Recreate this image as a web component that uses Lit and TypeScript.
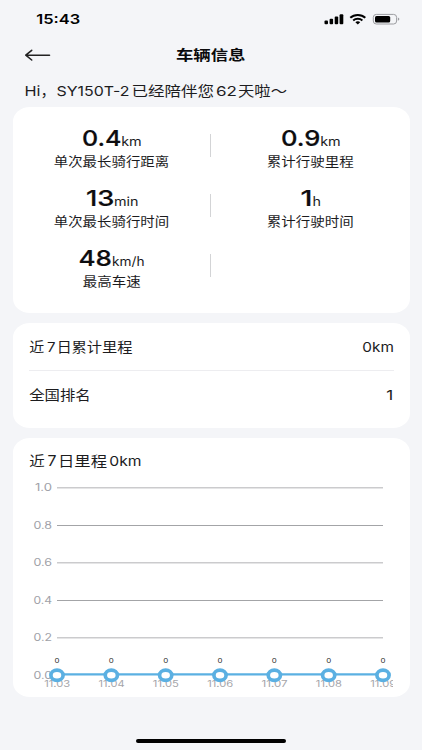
import { LitElement, html, svg, css } from "lit";
import { customElement } from "lit/decorators.js";

/** A piece of text: content, offset from the line start, width it is set to, font size. */
type Run = [text: string, x: number, width: number, size: number, cls?: string];

/** Sets a line in extended letterforms; the bottom of its box is the baseline. */
const line = (cls: string, width: number, height: number, runs: Run[]) => html`
  <svg class="line ${cls}" width=${width} height=${height}>
    ${runs.map(
      ([text, x, w, size, c = ""]) => svg`<text class=${c} x=${x} y=${height} font-size=${size}
        textLength=${w} lengthAdjust="spacingAndGlyphs">${text}</text>`
    )}
  </svg>`;

interface Stat {
  width: number;
  runs: Run[];
  label: string;
  labelWidth: number;
}

const STATS: (Stat | null)[][] = [
  [
    { width: 59, runs: [["0.4", 0, 39.5, 22, "big"], ["km", 39.2, 20.5, 12.5]], label: "单次最长骑行距离", labelWidth: 115.5 },
    { width: 59, runs: [["0.9", 0, 39.5, 22, "big"], ["km", 39.2, 20.5, 12.5]], label: "累计行驶里程", labelWidth: 87 },
  ],
  [
    { width: 52, runs: [["13", 0, 28.5, 22, "big"], ["min", 28, 24.5, 12.5]], label: "单次最长骑行时间", labelWidth: 115.5 },
    { width: 19, runs: [["1", -0.5, 12, 22, "big"], ["h", 11.5, 8.5, 12.5]], label: "累计行驶时间", labelWidth: 87 },
  ],
  [
    { width: 65, runs: [["48", -0.5, 33.5, 22, "big"], ["km/h", 33, 32.5, 12.5]], label: "最高车速", labelWidth: 58 },
    null,
  ],
];

const DAYS = ["11.03", "11.04", "11.05", "11.06", "11.07", "11.08", "11.09"];
const TICKS = ["1.0", "0.8", "0.6", "0.4", "0.2", "0.0"];

@customElement("mileage-chart")
export class MileageChart extends LitElement {
  static styles = css`
    :host { display: block; height: 220px; }
    svg { display: block; font-family: Inter, "Liberation Sans", sans-serif; }
    .tick { fill: #a0a1a8; }
    .day { fill: #a5a5aa; }
    .value { fill: #333; }
    .grid { stroke: #cbcbcd; stroke-width: 1.5; }
    .grid.dark { stroke: #a3a4a7; stroke-width: 1.1; }
    .series { stroke: #5bb0e2; stroke-width: 2.4; }
    .dot { fill: #fff; stroke: #5bb0e2; stroke-width: 3.7; }
  `;
  render() {
    const x0 = 28, x1 = 354;
    const y = (i: number) => 11.7 + i * 37.5;
    // Every second rule sits on a whole pixel row.
    const rule = (i: number) => (i % 2 ? Math.floor(y(i)) + 0.5 : y(i));
    const x = (i: number) => x0 + (i * (x1 - x0)) / (DAYS.length - 1);
    return html`<svg width="364.5" height="220">
      ${TICKS.map((t, i) => svg`
        ${i < 5 ? svg`<line class="grid ${i % 2 ? "dark" : ""}" x1=${x0} x2=${x1} y1=${rule(i)} y2=${rule(i)} />` : ""}
        <text class="tick" x=${i ? 4.5 : 6} y=${y(i) + 3.6} font-size="10.3" textLength=${i ? 18.5 : 17}
          lengthAdjust="spacingAndGlyphs">${t}</text>`)}
      ${DAYS.map((d, i) => svg`
        <text class="day" x=${x(i) - 12.8} y="211.2" font-size="9.2" textLength="26"
          lengthAdjust="spacingAndGlyphs">${d}</text>`)}
      <line class="series" x1=${x0} x2=${x1} y1="198.4" y2="198.4" />
      ${DAYS.map((_, i) => svg`
        <ellipse class="dot" cx=${x(i)} cy="199.3" rx="6.1" ry="5.1" />
        <text class="value" x=${x(i) - 2.5} y="186.8" font-size="6.3" textLength="5"
          lengthAdjust="spacingAndGlyphs">0</text>`)}
    </svg>`;
  }
}

@customElement("app-root")
export class AppRoot extends LitElement {
  static styles = css`
    :host {
      display: flex; flex-direction: column; box-sizing: border-box;
      width: 422px; height: 750px; overflow: hidden;
      background: #f4f5f8; color: #1c1c1e;
      font-family: Inter, "Noto Sans CJK SC", sans-serif;
    }
    .line { display: block; overflow: visible; fill: currentColor; flex: none; }
    .bold { font-weight: 700; color: #0b0b0c; margin-top: -2px; }
    .big { font-weight: 500; fill: #0d0d0f; stroke: #0d0d0f; stroke-width: 0.2px; }
    .status { display: flex; justify-content: space-between; height: 38px; padding: 0 22px 0 36px; box-sizing: border-box; }
    .clock { font-weight: 600; color: #000; margin-top: 14px; }
    .indicators { display: block; margin-top: 12px; }
    .nav { display: grid; grid-template-columns: 1fr 70px 1fr; align-items: center; height: 34px; }
    .back { margin-left: 24px; display: block; }
    .greeting { margin: 14px 0 11px 24px; }
    .card { background: #fff; border-radius: 17px / 14.5px; margin: 0 12.5px; box-sizing: border-box; flex: none; }
    .stats { height: 206px; padding-top: 23px; }
    .row { display: grid; grid-template-columns: 198px 2px 195.5px; height: 60px; }
    .stat { display: flex; flex-direction: column; align-items: center; gap: 9.5px; }
    .split { width: 1.5px; height: 23px; margin: 4px 0 0 -1px; background: #d3d4d6; }
    .totals { height: 104.5px; margin-top: 10px; padding: 0 16px; }
    .total { display: flex; justify-content: space-between; height: 47.5px; box-sizing: border-box; padding-top: 19px; }
    .total:first-child { border-bottom: 1px solid #ededf0; padding-top: 18.5px; }
    .chart { height: 259.5px; margin-top: 10px; padding: 18.5px 16px 0; }
    .chart mileage-chart { margin-top: 10px; }
    .home { width: 150px; height: 4.6px; border-radius: 3px; background: #000; margin: auto auto 6.7px; }
  `;

  private stat(s: Stat | null) {
    if (!s) return html`<div class="stat"></div>`;
    return html`<div class="stat">
      ${line("", s.width, 16, s.runs)}
      ${line("", s.labelWidth, 10, [[s.label, -0.3, s.labelWidth, 12.6]])}
    </div>`;
  }

  render() {
    return html`
      <div class="status">
        ${line("clock", 44, 10, [["15:43", 0.3, 44, 13.2]])}
        <svg class="indicators" width="77" height="14" viewBox="0 0 77 14">
          <rect x="1.5" y="8.6" width="3.5" height="3.6" rx="1" />
          <rect x="6.6" y="6.8" width="3.5" height="5.4" rx="1" />
          <rect x="11.7" y="4.6" width="3.5" height="7.6" rx="1" />
          <rect x="16.6" y="2.3" width="3.7" height="9.9" rx="1" />
          <g fill="none" stroke="#000" stroke-width="2">
            <path d="M27.3 5.8C31.3 2.1 38.3 2.1 42.3 5.8" />
            <path d="M30.2 8.4C32.7 6.2 36.9 6.2 39.4 8.4" />
          </g>
          <path d="M32.4 10.2C33.6 9 36 9 37.2 10.2L34.8 12.4Z" />
          <rect x="50.3" y="2.4" width="23.3" height="9.6" rx="3" fill="none" stroke="#9b9ca0" stroke-width="1" />
          <rect x="52" y="3.9" width="15.2" height="6.6" rx="1.6" />
          <path d="M74.9 5.6C76.9 6.1 76.9 8.3 74.9 8.8Z" fill="#9b9ca0" />
        </svg>
      </div>
      <div class="nav">
        <svg class="back" width="27" height="14" viewBox="0 0 27 14" fill="none" stroke="#222" stroke-width="1.6"
          stroke-linecap="round" stroke-linejoin="round">
          <path d="M25.5 7.2H2M7.7 2.3L1.8 7.2L7.7 12" />
        </svg>
        ${line("bold", 70, 12, [["车辆信息", 0, 69.5, 14]])}
      </div>
      <div class="greeting">
        ${line("", 263, 10, [
          ["Hi", 0.5, 16, 13.6], ["，", 16.5, 15, 13.6], ["SY150T-2", 32.5, 73, 13.6],
          ["已经陪伴您", 107.5, 82.5, 14], ["62", 192, 21, 13.6], ["天啦～", 214, 49, 14],
        ])}
      </div>
      <section class="card stats">
        ${STATS.map((r) => html`<div class="row">${this.stat(r[0])}<i class="split"></i>${this.stat(r[1])}</div>`)}
      </section>
      <section class="card totals">
        <div class="total">
          ${line("", 104, 10, [["近", 0.2, 15, 13.3], ["7", 18, 8.5, 13.3], ["日", 27.7, 15, 13.3], ["累计里程", 42.5, 61, 13.3]])}
          ${line("", 31, 10, [["0km", -0.7, 31.5, 13.3]])}
        </div>
        <div class="total">
          ${line("", 62, 10, [["全国排名", 0.2, 61.5, 13.3]])}
          ${line("", 7, 10, [["1", -0.7, 7, 13.3]])}
        </div>
      </section>
      <section class="card chart">
        ${line("", 113, 10, [["近", 0.2, 15.5, 14], ["7", 18.5, 9, 14], ["日里程", 29, 49, 14], ["0km", 80.3, 32.2, 13.6]])}
        <mileage-chart></mileage-chart>
      </section>
      <div class="home"></div>
    `;
  }
}
